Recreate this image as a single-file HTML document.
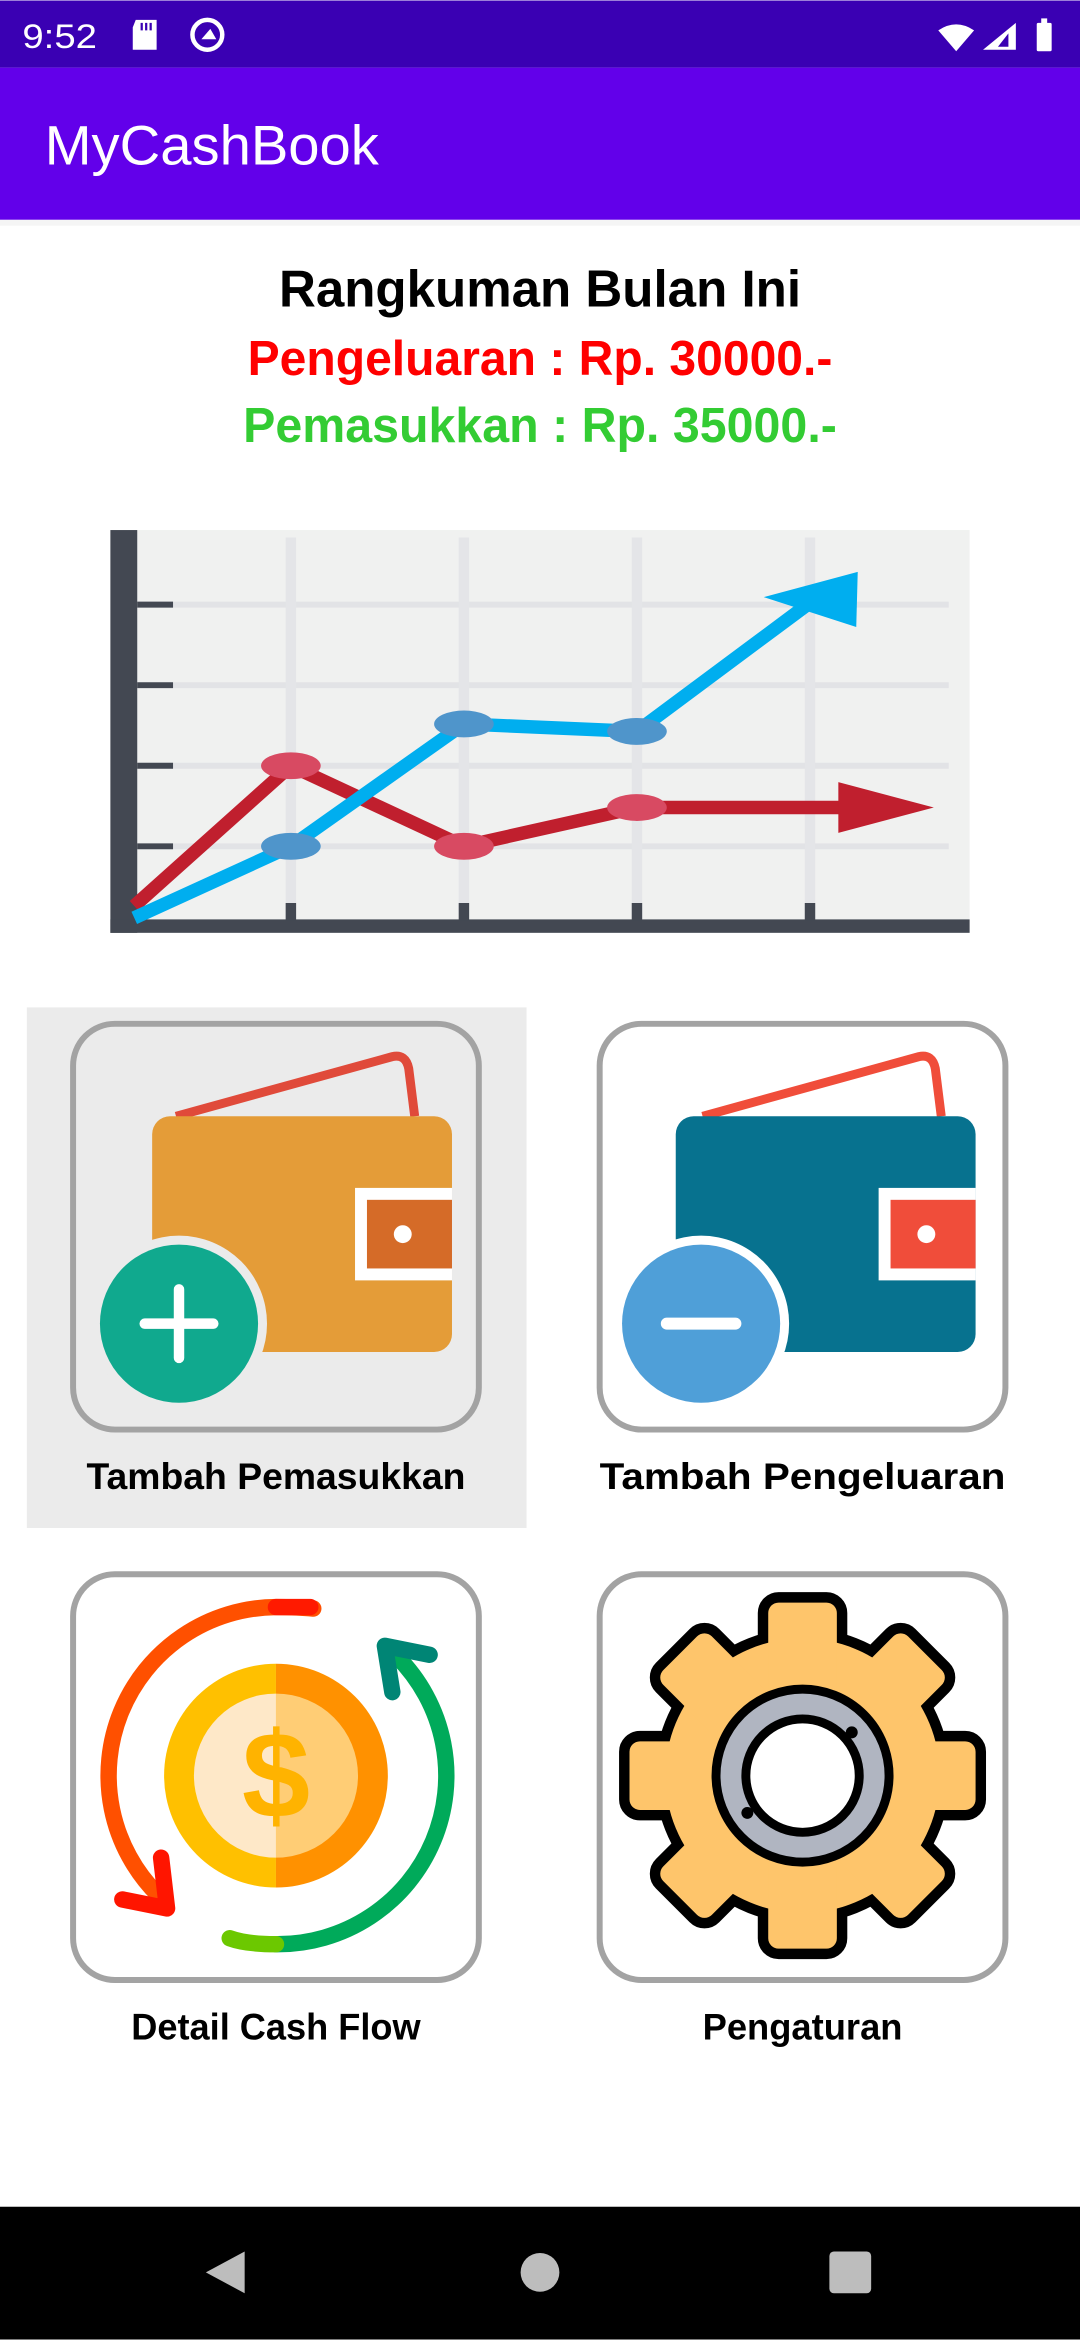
<!DOCTYPE html>
<html><head><meta charset="utf-8"><style>
html,body{margin:0;padding:0;width:1080px;height:2340px;overflow:hidden;background:#fff}
svg{display:block}
text{font-family:"Liberation Sans",sans-serif}
</style></head><body>
<svg width="1080" height="2340" viewBox="0 0 724 1568" xmlns="http://www.w3.org/2000/svg">
<rect x="0" y="0" width="724" height="1568" fill="#fff"/>
<!-- status bar -->
<rect x="0" y="0" width="724" height="45" fill="#3a00b3"/>
<text x="15" y="32" font-size="23" fill="#fff" textLength="50" lengthAdjust="spacingAndGlyphs">9:52</text>
<path d="M91,13 H105 V33 H89 V18 Z" fill="#fff"/>
<path d="M95,15v5M98,15v5M101,15v5" stroke="#3a00b3" stroke-width="1.5"/>
<circle cx="139" cy="23" r="10" fill="none" stroke="#fff" stroke-width="3"/>
<path d="M135,26 L141,19 L145,26 Z" fill="#fff"/>
<path d="M629,20 Q641,12 653,20 L641,34 Z" fill="#fff"/>
<path d="M681,15 V33 H659 Z" fill="#fff"/>
<path d="M676,22 V31 H669 Z" fill="#3a00b3"/>
<rect x="695" y="15" width="10" height="19" fill="#fff" rx="1"/>
<rect x="698" y="12" width="4" height="4" fill="#fff"/>
<!-- app bar -->
<rect x="0" y="45" width="724" height="102" fill="#6200ea"/>
<rect x="0" y="147" width="724" height="4" fill="#eee" opacity="0.6"/>
<text x="30" y="110" font-size="37" fill="#fff" textLength="224" lengthAdjust="spacingAndGlyphs">MyCashBook</text>
<!-- header text -->
<text x="362" y="205" font-size="35" font-weight="bold" fill="#000" text-anchor="middle" textLength="350" lengthAdjust="spacingAndGlyphs">Rangkuman Bulan Ini</text>
<text x="362" y="251" font-size="33" font-weight="bold" fill="#ff0000" text-anchor="middle" textLength="392" lengthAdjust="spacingAndGlyphs">Pengeluaran : Rp. 30000.-</text>
<text x="362" y="296" font-size="33" font-weight="bold" fill="#33cc33" text-anchor="middle" textLength="398" lengthAdjust="spacingAndGlyphs">Pemasukkan : Rp. 35000.-</text>
<!-- chart -->
<rect x="74" y="355" width="576" height="270" fill="#f0f1f0"/>
<g stroke="#e2e3e6" stroke-width="4">
<path d="M92,405H636M92,459H636M92,513H636M92,567H636"/>
</g>
<g stroke="#e4e5e8" stroke-width="7">
<path d="M195,360V616M311,360V616M427,360V616M543,360V616"/>
</g>
<rect x="74" y="355" width="18" height="270" fill="#434852"/>
<rect x="74" y="616" width="576" height="9" fill="#434852"/>
<g stroke="#434852" stroke-width="4"><path d="M92,405h24M92,459h24M92,513h24M92,567h24"/></g>
<g stroke="#434852" stroke-width="7"><path d="M195,605v12M311,605v12M427,605v12M543,605v12"/></g>
<polyline points="90,607 195,513 311,567 427,541 565,541" fill="none" stroke="#c01f2e" stroke-width="9" stroke-linejoin="round"/>
<polygon points="562,524 626,541 562,558" fill="#c01f2e"/>
<polyline points="90,615 195,567 311,485 427,490 548,400" fill="none" stroke="#00aeef" stroke-width="9" stroke-linejoin="round"/>
<polygon points="512,400 575,383 574,420" fill="#00aeef"/>
<g fill="#d84a62"><ellipse cx="195" cy="513" rx="20" ry="9"/><ellipse cx="311" cy="567" rx="20" ry="9"/><ellipse cx="427" cy="541" rx="20" ry="9"/></g>
<g fill="#4f95cb"><ellipse cx="195" cy="567" rx="20" ry="9"/><ellipse cx="311" cy="485" rx="20" ry="9"/><ellipse cx="427" cy="490" rx="20" ry="9"/></g>
<!-- card 1 -->
<rect x="18" y="675" width="335" height="349" fill="#ebebeb"/>
<rect x="49" y="686" width="272" height="272" rx="28" fill="none" stroke="#a3a3a3" stroke-width="4"/>
<path d="M118,748 L263,708 Q272,706 274,716 L278,748" fill="none" stroke="#e04a3a" stroke-width="6"/>
<rect x="102" y="748" width="201" height="158" rx="12" fill="#e49c38"/>
<rect x="238" y="796" width="65" height="62" fill="#fff"/>
<rect x="246" y="804" width="57" height="46" fill="#d56b28"/>
<circle cx="270" cy="827" r="6" fill="#fff"/>
<circle cx="120" cy="887" r="59" fill="#ebebeb"/>
<circle cx="120" cy="887" r="53" fill="#10a98e"/>
<path d="M120,864v46M97,887h46" stroke="#fff" stroke-width="7" stroke-linecap="round"/>
<text x="185" y="998" font-size="25" font-weight="bold" fill="#000" text-anchor="middle" textLength="254" lengthAdjust="spacingAndGlyphs">Tambah Pemasukkan</text>
<!-- card 2 -->
<rect x="402" y="686" width="272" height="272" rx="28" fill="#fff" stroke="#a3a3a3" stroke-width="4"/>
<path d="M471,748 L616,708 Q625,706 627,716 L631,748" fill="none" stroke="#f04d3a" stroke-width="6"/>
<rect x="453" y="748" width="201" height="158" rx="12" fill="#07728f"/>
<rect x="589" y="796" width="65" height="62" fill="#fff"/>
<rect x="597" y="804" width="57" height="46" fill="#f04d3a"/>
<circle cx="621" cy="827" r="6" fill="#fff"/>
<circle cx="470" cy="887" r="59" fill="#fff"/>
<circle cx="470" cy="887" r="53" fill="#4f9fd8"/>
<path d="M447,887h46" stroke="#fff" stroke-width="8" stroke-linecap="round"/>
<text x="538" y="998" font-size="25" font-weight="bold" fill="#000" text-anchor="middle" textLength="272" lengthAdjust="spacingAndGlyphs">Tambah Pengeluaran</text>
<!-- card 3 -->
<rect x="49" y="1055" width="272" height="272" rx="28" fill="#fff" stroke="#a3a3a3" stroke-width="4"/>
<path d="M185,1115 A75,75 0 0 0 185,1265 Z" fill="#ffc000"/>
<path d="M185,1115 A75,75 0 0 1 185,1265 Z" fill="#ff9100"/>
<path d="M185,1135 A55,55 0 0 0 185,1245 Z" fill="#fee8c8"/>
<path d="M185,1135 A55,55 0 0 1 185,1245 Z" fill="#ffcd75"/>
<text x="185" y="1218" font-size="82" font-weight="bold" fill="#ffb300" text-anchor="middle">$</text>
<path d="M210,1078 Q200,1077 185,1077 A113,113 0 0 0 106,1270" fill="none" stroke="#ff5000" stroke-width="11" stroke-linecap="round"/>
<path d="M185,1077 H208" stroke="#ff1a00" stroke-width="11" stroke-linecap="round"/>
<polyline points="82,1273 112,1279 108,1245" fill="none" stroke="#ff1500" stroke-width="11" stroke-linecap="round" stroke-linejoin="round"/>
<path d="M266,1110 A113,113 0 0 1 185,1303" fill="none" stroke="#00aa5a" stroke-width="11" stroke-linecap="round"/>
<path d="M185,1303 Q165,1303 154,1299" fill="none" stroke="#6cc800" stroke-width="11" stroke-linecap="round"/>
<polyline points="288,1109 258,1103 263,1134" fill="none" stroke="#008575" stroke-width="11" stroke-linecap="round" stroke-linejoin="round"/>
<text x="185" y="1367" font-size="25" font-weight="bold" fill="#000" text-anchor="middle" textLength="194" lengthAdjust="spacingAndGlyphs">Detail Cash Flow</text>
<!-- card 4 -->
<rect x="402" y="1055" width="272" height="272" rx="28" fill="#fff" stroke="#a3a3a3" stroke-width="4"/>
<defs>
<g id="gear">
<circle cx="538" cy="1190" r="92"/>
<g id="t2"><rect x="515" y="1074" width="46" height="232" rx="7"/><rect x="422" y="1167" width="232" height="46" rx="7"/></g>
<use href="#t2" transform="rotate(45 538 1190)"/>
</g>
</defs>
<use href="#gear" fill="#000" stroke="#000" stroke-width="14" stroke-linejoin="round"/>
<use href="#gear" fill="#fec56b"/>
<circle cx="538" cy="1190" r="58" fill="#b0b5c1" stroke="#000" stroke-width="6"/>
<circle cx="538" cy="1190" r="38" fill="#fff" stroke="#000" stroke-width="6"/>
<circle cx="501" cy="1215" r="4" fill="#000"/>
<circle cx="571" cy="1161" r="4" fill="#000"/>
<text x="538" y="1367" font-size="25" font-weight="bold" fill="#000" text-anchor="middle" textLength="134" lengthAdjust="spacingAndGlyphs">Pengaturan</text>
<!-- nav bar -->
<rect x="0" y="1479" width="724" height="89" fill="#000"/>
<polygon points="138,1523 164,1509 164,1537" fill="#bdbdbd"/>
<circle cx="362" cy="1523" r="13" fill="#bdbdbd"/>
<rect x="556" y="1509" width="28" height="28" rx="3" fill="#bdbdbd"/>
</svg>
</body></html>
